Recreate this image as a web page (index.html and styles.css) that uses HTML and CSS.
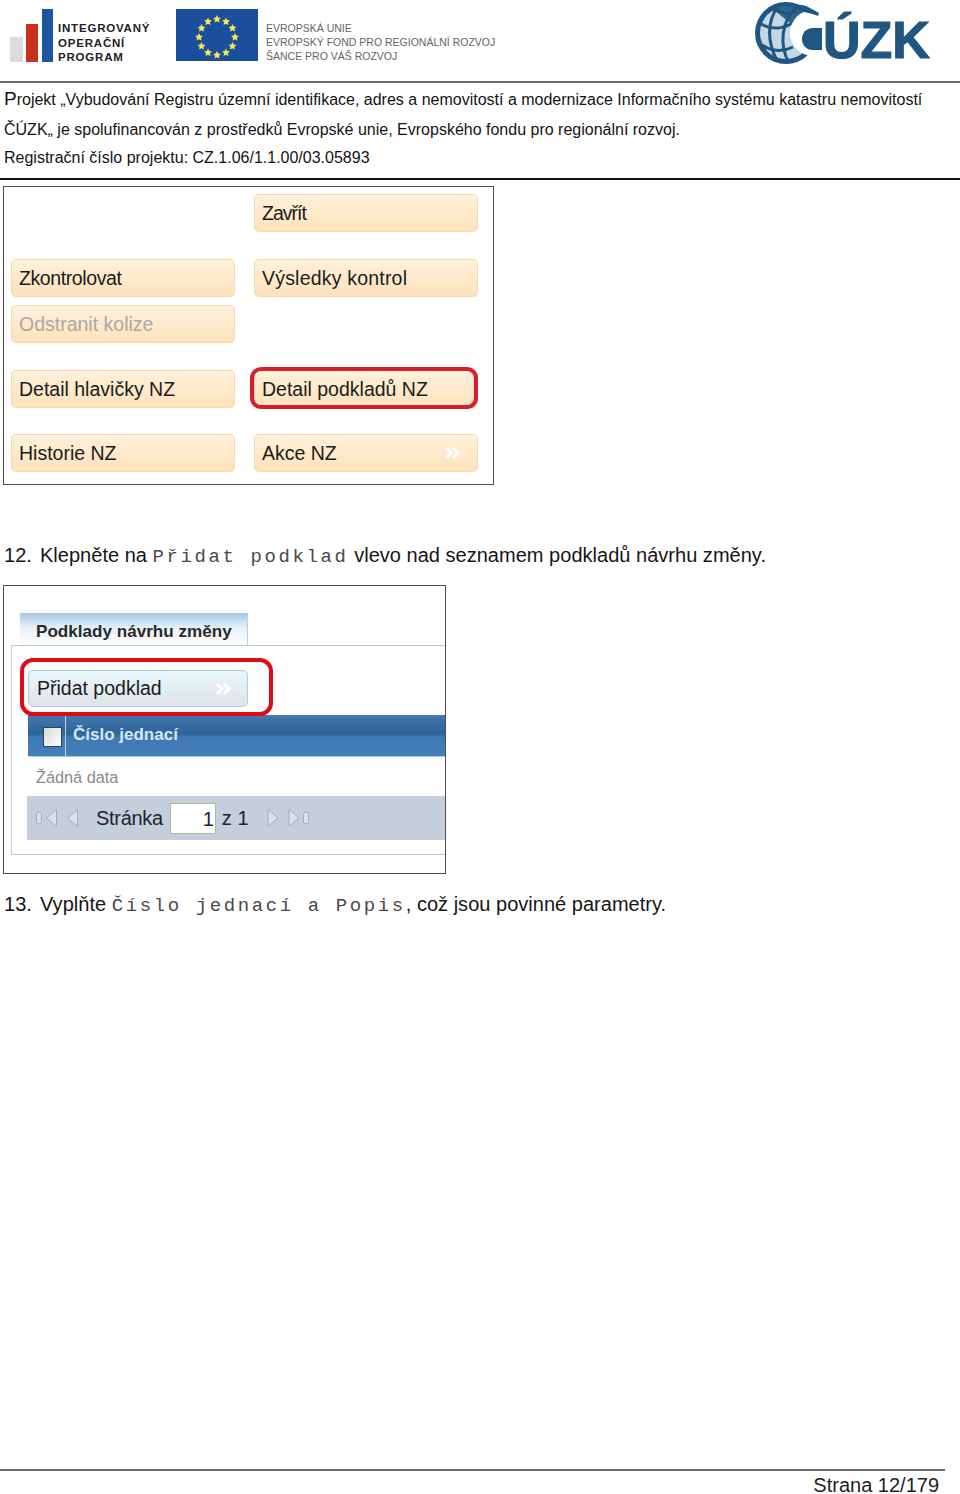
FILE: index.html
```html
<!DOCTYPE html>
<html lang="cs">
<head>
<meta charset="utf-8">
<title>Strana 12/179</title>
<link rel="stylesheet" href="styles.css">
</head>
<body>
<header class="logos">
  <div class="iop">
    <svg class="iop-bars" width="44" height="53" viewBox="0 0 44 53"><rect x="0" y="28" width="13" height="25" fill="#dcdcdc"/><rect x="16" y="15" width="12" height="38" fill="#c5311d"/><rect x="32" y="0" width="11" height="53" fill="#1d56a0"/></svg>
    <div class="iop-text"><div>INTEGROVANÝ</div><div>OPERAČNÍ</div><div>PROGRAM</div></div>
  </div>
  <svg class="eu-flag" width="82" height="52" viewBox="0 0 82 52">
    <rect width="82" height="52" fill="#1a4f9e"/>
    <g fill="#f5e94a">
      <path id="s" d="M41 6l1.200 2.600 2.800.3-2.100 1.900.6 2.800-2.500-1.400-2.500 1.400.6-2.800-2.100-1.900 2.800-.3z"/>
      <use href="#s" x="9" y="2.500"/><use href="#s" x="15.500" y="9"/><use href="#s" x="18" y="18"/><use href="#s" x="15.500" y="27"/><use href="#s" x="9" y="33.500"/><use href="#s" y="36"/><use href="#s" x="-9" y="33.500"/><use href="#s" x="-15.500" y="27"/><use href="#s" x="-18" y="18"/><use href="#s" x="-15.500" y="9"/><use href="#s" x="-9" y="2.500"/>
    </g>
  </svg>
  <div class="eu-text"><div>EVROPSKÁ UNIE</div><div>EVROPSKÝ FOND PRO REGIONÁLNÍ ROZVOJ</div><div>ŠANCE PRO VÁŠ ROZVOJ</div></div>
  <div class="cuzk">
    <svg class="cuzk-globe" width="70" height="66" viewBox="0 0 70 66">
      <circle cx="33" cy="32" r="31" fill="#1f5682"/>
      <circle cx="33" cy="32" r="26" fill="#c4d7e4"/>
      <path d="M20 7C30 3 42 5 52 12L40 24C32 18 25 13 20 7z" fill="#2f668e"/>
      <g fill="none" stroke="#1f5682" stroke-width="3">
        <path d="M5 21C18 30 35 30 48 14"/><path d="M4 40C14 50 28 52 40 46"/><path d="M20 7C26 12 36 14 44 10"/><path d="M26 3C14 20 14 40 24 60"/><path d="M44 6C28 20 26 44 36 62"/>
      </g>
      <circle cx="60" cy="32" r="23" fill="#fff"/>
      <path d="M44 4C52 3 58 8 66 12L65 15C57 12 51 11 46 10z" fill="#1f5682"/>
      <path d="M69 27H60C53 27 49 32 49 38C49 44 53 49 60 49H69z" fill="#1f5682"/>
    </svg>
    <span class="cuzk-text">ÚZK</span>
  </div>
</header>

<section class="project">
  <p class="project-line"><span class="initial">P</span>rojekt „Vybudování Registru územní identifikace, adres a nemovitostí a modernizace Informačního systému katastru nemovitostí</p>
  <p class="project-line">ČÚZK„ je spolufinancován z prostředků Evropské unie, Evropského fondu pro regionální rozvoj.</p>
  <p class="project-line project-last">Registrační číslo projektu: CZ.1.06/1.1.00/03.05893</p>
</section>

<section class="shot shot-actions">
  <div class="btn-row"><span class="btn-slot"></span><button class="btn btn-tighter">Zavřít</button></div>
  <div class="btn-row gap-l"><button class="btn btn-tight">Zkontrolovat</button><button class="btn btn-wide">Výsledky kontrol</button></div>
  <div class="btn-row gap-s"><button class="btn btn-off">Odstranit kolize</button><span class="btn-slot"></span></div>
  <div class="btn-row gap-l"><button class="btn">Detail hlavičky NZ</button><button class="btn btn-marked">Detail podkladů NZ</button></div>
  <div class="btn-row gap-m"><button class="btn">Historie NZ</button><button class="btn btn-more">Akce NZ
    <svg class="chev" width="18" height="14" viewBox="0 0 18 14"><path d="M2 2l5 5-5 5M9 2l5 5-5 5" fill="none" stroke="#fff" stroke-width="3"/></svg></button></div>
</section>

<p class="step step-12"><span class="step-no">12.</span><span>Klepněte na <code>Přidat podklad</code> vlevo nad seznamem podkladů návrhu změny.</span></p>

<section class="shot shot-list">
  <div class="tab">Podklady návrhu změny</div>
  <div class="tab-body">
    <button class="btn-blue">Přidat podklad
      <svg class="chev" width="18" height="14" viewBox="0 0 18 14"><path d="M2 2l5 5-5 5M9 2l5 5-5 5" fill="none" stroke="#fff" stroke-width="3"/></svg></button>
    <div class="grid-head"><span class="check-cell"><span class="check"></span></span><span class="grid-title">Číslo jednací</span></div>
    <div class="grid-empty">Žádná data</div>
    <div class="pager">
      <svg class="pager-icons" width="54" height="20" viewBox="0 0 54 20"><g fill="#dbe1e8" stroke="#a3acb5"><rect x=".5" y="4" width="5" height="12" rx="2.500"/><path d="M20.500 1.500v17l-10-8.500z"/><path d="M41.500 1.500v17l-10-8.500z"/></g></svg>
      <span class="pager-label">Stránka</span>
      <span class="pager-input">1</span>
      <span class="pager-of">z 1</span>
      <svg class="pager-icons pager-next" width="44" height="20" viewBox="0 0 44 20"><g fill="#dbe1e8" stroke="#a3acb5"><path d="M1 1.500v17l10-8.500z"/><path d="M22 1.500v17l10-8.500z"/><rect x="36.500" y="4" width="5" height="12" rx="2.500"/></g></svg>
    </div>
  </div>
</section>

<p class="step step-13"><span class="step-no">13.</span><span>Vyplňte <code>Číslo jednací a Popis</code>, což jsou povinné parametry.</span></p>

<footer class="foot">Strana 12/179</footer>
</body>
</html>
```
FILE: styles.css
```css
* { box-sizing: border-box; }
html, body { margin: 0; padding: 0; }
body {
  width: 960px;
  height: 1494px;
  display: flex;
  flex-direction: column;
  background: #fff;
  color: #141414;
  font-family: "Liberation Sans", Arial, sans-serif;
  overflow: hidden;
}

/* Header logos */
.logos {
  height: 83px;
  flex: none;
  display: flex;
  align-items: flex-start;
  border-bottom: 2px solid #6b6b6b;
}
.iop { display: flex; margin: 9px 0 0 10px; width: 166px; }
.iop-bars { flex: none; }
.iop-text {
  margin: 12px 0 0 4px;
  font-size: 11.500px;
  line-height: 14.500px;
  font-weight: 700;
  letter-spacing: .8px;
  color: #222;
  white-space: nowrap;
}
.eu-flag { flex: none; margin-top: 9px; }
.eu-text {
  margin: 21px 0 0 8px;
  font-size: 10.500px;
  line-height: 14px;
  color: #666;
  white-space: nowrap;
}
.cuzk {
  margin: 0 0 0 auto;
  display: flex;
  align-items: flex-start;
  width: 207px;
}
.cuzk-globe { flex: none; margin-top: 1px; }
.cuzk-text {
  padding-top: 8px;
  font-size: 52px;
  line-height: 64px;
  font-weight: 700;
  color: #1f5682;
  -webkit-text-stroke: 1.200px #1f5682;
}

/* Project text */
.project {
  height: 97px;
  flex: none;
  padding: 1px 0 0 4px;
  border-bottom: 2px solid #111;
}
.project-line {
  margin: 0;
  font-size: 16px;
  line-height: 29.500px;
  white-space: nowrap;
}
.project-last { margin-top: -1px; }
.initial { font-size: 19px; }

/* Screenshots */
.shot {
  flex: none;
  margin-left: 3px;
  background: #fff;
  border: 1px solid #4d4d4d;
}
.shot-actions {
  margin-top: 6px;
  width: 491px;
  height: 299px;
  padding: 7px 0 0 7px;
}
.btn-row { display: flex; gap: 19px; height: 38px; }
.gap-l { margin-top: 27px; }
.gap-m { margin-top: 26px; }
.gap-s { margin-top: 8px; }
.btn-slot { width: 224px; flex: none; }
.btn, .btn-blue {
  display: flex;
  align-items: center;
  justify-content: space-between;
  font-family: "Liberation Sans", Arial, sans-serif;
  font-size: 19.500px;
  color: #1c1c1c;
  text-align: left;
  position: relative;
}
.btn {
  width: 224px;
  height: 38px;
  flex: none;
  padding: 0 15px 0 7px;
  border: 1px solid #f6d9ac;
  border-radius: 5px;
  background: linear-gradient(#fff1dc, #fde2bb);
}
.btn-tight { letter-spacing: -.4px; }
.btn-tighter { letter-spacing: -1px; }
.btn-wide { letter-spacing: .2px; }
.btn-off { color: #a8a8a8; }
.btn-marked::after {
  content: "";
  position: absolute;
  left: -5px;
  right: -1px;
  top: -4px;
  bottom: -2px;
  border: 4px solid #d81e2a;
  border-radius: 11px;
}

.shot-list {
  margin-top: 15px;
  width: 443px;
  height: 289px;
  padding: 27px 0 0 7px;
  overflow: hidden;
}
.tab {
  margin-left: 9px;
  width: 228px;
  height: 33px;
  padding: 9px 0 0 16px;
  background: linear-gradient(#a4c8e6, #e6f0f7 45%, #fff);
  border-right: 1px solid #b5d0d8;
  font-size: 17.100px;
  line-height: 20px;
  font-weight: 700;
  color: #2a2a2a;
  white-space: nowrap;
}
.tab-body {
  margin-top: -1px;
  height: 210px;
  width: 440px;
  padding: 24px 0 0 16px;
  border: 1px solid #b5d0d8;
  border-right: 0;
  position: relative;
}
.btn-blue {
  width: 220px;
  height: 37px;
  padding: 0 14px 0 8px;
  border: 1px solid #a6cfe0;
  border-radius: 5px;
  background: linear-gradient(#e9f8fb, #dfe3e6);
}
.btn-blue::after {
  content: "";
  position: absolute;
  left: -9px;
  right: -26px;
  top: -13px;
  bottom: -10px;
  border: 4px solid #e00a14;
  border-radius: 13px;
}
.grid-head {
  display: flex;
  align-items: stretch;
  height: 42px;
  margin-top: 8px;
  background: linear-gradient(#4379ae, #2e6399 45%, #3f79b4 55%, #4480bb);
  border-bottom: 1px solid #a9cdea;
}
.check-cell {
  width: 38px;
  flex: none;
  border-right: 1px solid #bcd6ec;
  display: flex;
  align-items: center;
  justify-content: flex-end;
  padding: 2px 3px 0 0;
}
.check {
  width: 19px;
  height: 20px;
  border: 1px solid #24466b;
  background: linear-gradient(135deg, #d8d8d4, #fff);
}
.grid-title {
  margin-left: 7px;
  font-size: 17px;
  line-height: 40px;
  font-weight: 700;
  color: #d6e8f6;
}
.grid-empty {
  height: 39px;
  padding-left: 8px;
  font-size: 16.300px;
  line-height: 41px;
  color: #8a8a8a;
}
.pager {
  margin-left: -1px;
  height: 44px;
  display: flex;
  align-items: center;
  padding: 0 0 0 9px;
  background: #c5cfdb;
  font-size: 20px;
  color: #1e2230;
}
.pager-icons { flex: none; }
.pager-label { margin-left: 6px; letter-spacing: -.3px; }
.pager-input {
  width: 46px;
  height: 31px;
  margin-left: 7px;
  padding-right: 1px;
  text-align: right;
  line-height: 30px;
  background: #fff;
  border: 1px solid #a9bd93;
}
.pager-of { margin-left: 6px; }
.pager-next { margin-left: 18px; }

/* Steps */
.step {
  flex: none;
  display: flex;
  height: 30px;
  margin: 0;
  padding-left: 4px;
  font-size: 20px;
  line-height: 30px;
  letter-spacing: .02px;
  color: #161616;
  white-space: nowrap;
}
.step-12 { margin-top: 55px; }
.step-13 { margin-top: 15px; }
.step-no { width: 36px; flex: none; }
code {
  font-family: "Liberation Mono", "Courier New", monospace;
  font-size: 19px;
  letter-spacing: 2.600px;
  color: #4a4a4a;
}

/* Footer */
.foot {
  flex: none;
  margin-top: auto;
  width: 945px;
  height: 25px;
  padding-right: 6px;
  border-top: 2px solid #6b6b6b;
  text-align: right;
  font-size: 20px;
  line-height: 28px;
  color: #222;
}
```
